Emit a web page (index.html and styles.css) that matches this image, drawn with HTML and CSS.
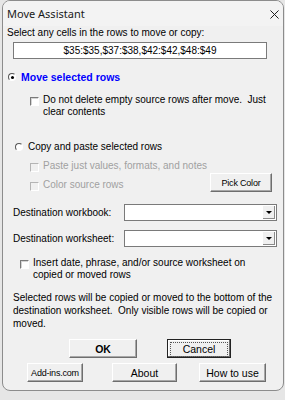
FILE: index.html
```html
<!DOCTYPE html>
<html lang="en">
<head>
<meta charset="UTF-8">
<meta name="viewport" content="width=device-width, initial-scale=1.0">
<title>Move Assistant</title>
<link rel="stylesheet" href="styles.css">
</head>
<body>

  <div class="window">
    <!-- title bar -->
    <div class="titlebar">
      <span class="title">Move Assistant</span>
      <svg class="close" width="10" height="10" viewBox="0 0 10 10">
        <path d="M0.5 0.5 L9.5 9.5 M9.5 0.5 L0.5 9.5" stroke="#1a1a1a" stroke-width="1.1" fill="none"/>
      </svg>
    </div>

    <div class="content">
      <div class="prompt">Select any cells in the rows to move or copy:</div>
      <div class="rangebox">$35:$35,$37:$38,$42:$42,$48:$49</div>

      <div class="option move-opt">
        <span class="radio checked"></span>
        <span class="move-label">Move selected rows</span>
      </div>

      <div class="check keep-check">
        <span class="box"></span>
        <span class="check-text">Do not delete empty source rows after move.&nbsp; Just clear contents</span>
      </div>

      <div class="option copy-opt">
        <span class="radio"></span>
        <span>Copy and paste selected rows</span>
      </div>

      <div class="check sub disabled paste-check">
        <span class="box"></span>
        <span>Paste just values, formats, and notes</span>
      </div>

      <div class="color-row">
        <div class="check sub disabled">
          <span class="box"></span>
          <span>Color source rows</span>
        </div>
        <button class="btn small pick">Pick Color</button>
      </div>

      <div class="dest-row first">
        <span class="dest-label">Destination workbook:</span>
        <div class="combo"><span class="combo-arrow"></span></div>
      </div>
      <div class="dest-row">
        <span class="dest-label">Destination worksheet:</span>
        <div class="combo"><span class="combo-arrow"></span></div>
      </div>

      <div class="check insert-check">
        <span class="box"></span>
        <span class="check-text">Insert date, phrase, and/or source worksheet on copied or moved rows</span>
      </div>

      <p class="note">Selected rows will be copied or moved to the bottom of the destination worksheet.&nbsp; Only visible rows will be copied or moved.</p>

      <div class="main-buttons">
        <button class="btn ok">OK</button>
        <button class="btn cancel"><span class="focus">Cancel</span></button>
      </div>

      <div class="extra-buttons">
        <button class="btn small addins">Add-ins.com</button>
        <button class="btn about">About</button>
        <button class="btn howto">How to use</button>
      </div>
    </div>
  </div>

</body>
</html>
```

FILE: styles.css
```css
body {
  margin: 0;
  background: #e6e6e6;
  font-family: "Liberation Sans", Arial, sans-serif;
  font-size: 10px;
  color: #000;
}

.window {
  box-sizing: border-box;
  width: 282px;
  height: 391px;
  margin-left: 2px;
  background: #f0f0f0;
  border: 1px solid #8c8c8c;
  border-radius: 8px;
  overflow: hidden;
}

.titlebar {
  height: 25px;
  display: flex;
  align-items: center;
  justify-content: space-between;
  padding: 0 4px 0 4px;
  background: #f3f3f3;
}

.title {
  font-family: "Noto Sans", sans-serif;
  font-size: 11px;
  color: #1a1a1a;
}

.close {
  width: 9px;
  height: 9px;
  margin-top: 1px;
}

.content {
  padding: 0 0 0 10px;
}

.prompt {
  margin-left: -6px;
  line-height: 13px;
}

.rangebox {
  box-sizing: border-box;
  width: 254px;
  height: 17px;
  margin-top: 3px;
  background: #fff;
  border: 1px solid #7a7a7a;
  text-align: center;
  line-height: 15px;
}

.option {
  display: flex;
  align-items: center;
  line-height: 14px;
}

.move-opt {
  margin: 11px 0 0 -5px;
}

.move-label {
  color: #0000ff;
  font-weight: bold;
  font-size: 10.5px;
}

.radio {
  box-sizing: border-box;
  width: 8px;
  height: 8px;
  margin-right: 5px;
  border-radius: 50%;
  background: #fff;
  border: 1px solid #fff;
  border-top-color: #555;
  border-left-color: #555;
  position: relative;
}

.radio.checked::after {
  content: "";
  position: absolute;
  left: 1.5px;
  top: 1.5px;
  width: 3px;
  height: 3px;
  border-radius: 50%;
  background: #000;
}

.check {
  display: flex;
  align-items: flex-start;
  line-height: 12px;
}

.box {
  box-sizing: border-box;
  flex: none;
  width: 9px;
  height: 9px;
  margin: 3px 4px 0 0;
  background: #fff;
  border: 1px solid #fff;
  border-top-color: #7a7a7a;
  border-left-color: #7a7a7a;
  box-shadow: inset 1px 1px 0 #d4d4d4;
}

.keep-check {
  margin: 10px 0 0 17px;
}

.keep-check .check-text {
  width: 236px;
}

.copy-opt {
  margin: 22px 0 0 2px;
}

.sub {
  margin-left: 17px;
}

.disabled {
  color: #a0a0a0;
}

.disabled .box {
  background: #f0f0f0;
  border-top-color: #b4b4b4;
  border-left-color: #b4b4b4;
  box-shadow: none;
}

.paste-check {
  margin-top: 6px;
}

.color-row {
  display: flex;
  justify-content: space-between;
  align-items: flex-start;
  width: 259px;
}

.color-row .check {
  margin-top: 7px;
}

.btn {
  box-sizing: border-box;
  height: 19px;
  padding: 0;
  background: #f0f0f0;
  border: 1px solid;
  border-color: #fff #6e6e6e #6e6e6e #fff;
  box-shadow: inset -1px -1px 0 #a8a8a8;
  font-family: "Liberation Sans", Arial, sans-serif;
  font-size: 10.5px;
  color: #000;
}

.btn.small {
  font-size: 9px;
  letter-spacing: -0.2px;
}

.pick {
  width: 62px;
  margin-top: 1px;
}

.dest-row {
  display: flex;
  align-items: center;
  justify-content: space-between;
  width: 264px;
  margin-top: 9px;
}

.dest-row.first {
  margin-top: 12px;
}

.combo {
  box-sizing: border-box;
  width: 153px;
  height: 17px;
  background: #fff;
  border: 1px solid #7a7a7a;
  position: relative;
}

.combo-arrow {
  position: absolute;
  right: 1px;
  top: 1px;
  width: 12px;
  height: 13px;
  background: #f0f0f0;
  border-left: 1px solid #fff;
  box-shadow: inset -1px -1px 0 #8a8a8a;
}

.combo-arrow::after {
  content: "";
  position: absolute;
  left: 3px;
  top: 5px;
  border-left: 3px solid transparent;
  border-right: 3px solid transparent;
  border-top: 3px solid #000;
}

.insert-check {
  margin: 10px 0 0 7px;
}

.insert-check .check-text {
  width: 230px;
}

.note {
  width: 268px;
  margin: 10px 0 0 0;
  line-height: 13px;
}

.main-buttons {
  display: flex;
  gap: 30px;
  margin: 9px 0 0 56px;
}

.ok {
  width: 68px;
  font-weight: bold;
}

.cancel {
  width: 64px;
  border: 1px solid #222;
  box-shadow: inset -1px -1px 0 #6e6e6e, inset 1px 1px 0 #fff;
  padding: 2px;
}

.focus {
  display: block;
  height: 13px;
  line-height: 12px;
  border: 1px dotted #555;
}

.extra-buttons {
  display: flex;
  margin: 5px 0 0 14px;
}

.addins {
  width: 56px;
}

.about {
  width: 65px;
  margin-left: 29px;
}

.howto {
  width: 67px;
  margin-left: 22px;
}
```
